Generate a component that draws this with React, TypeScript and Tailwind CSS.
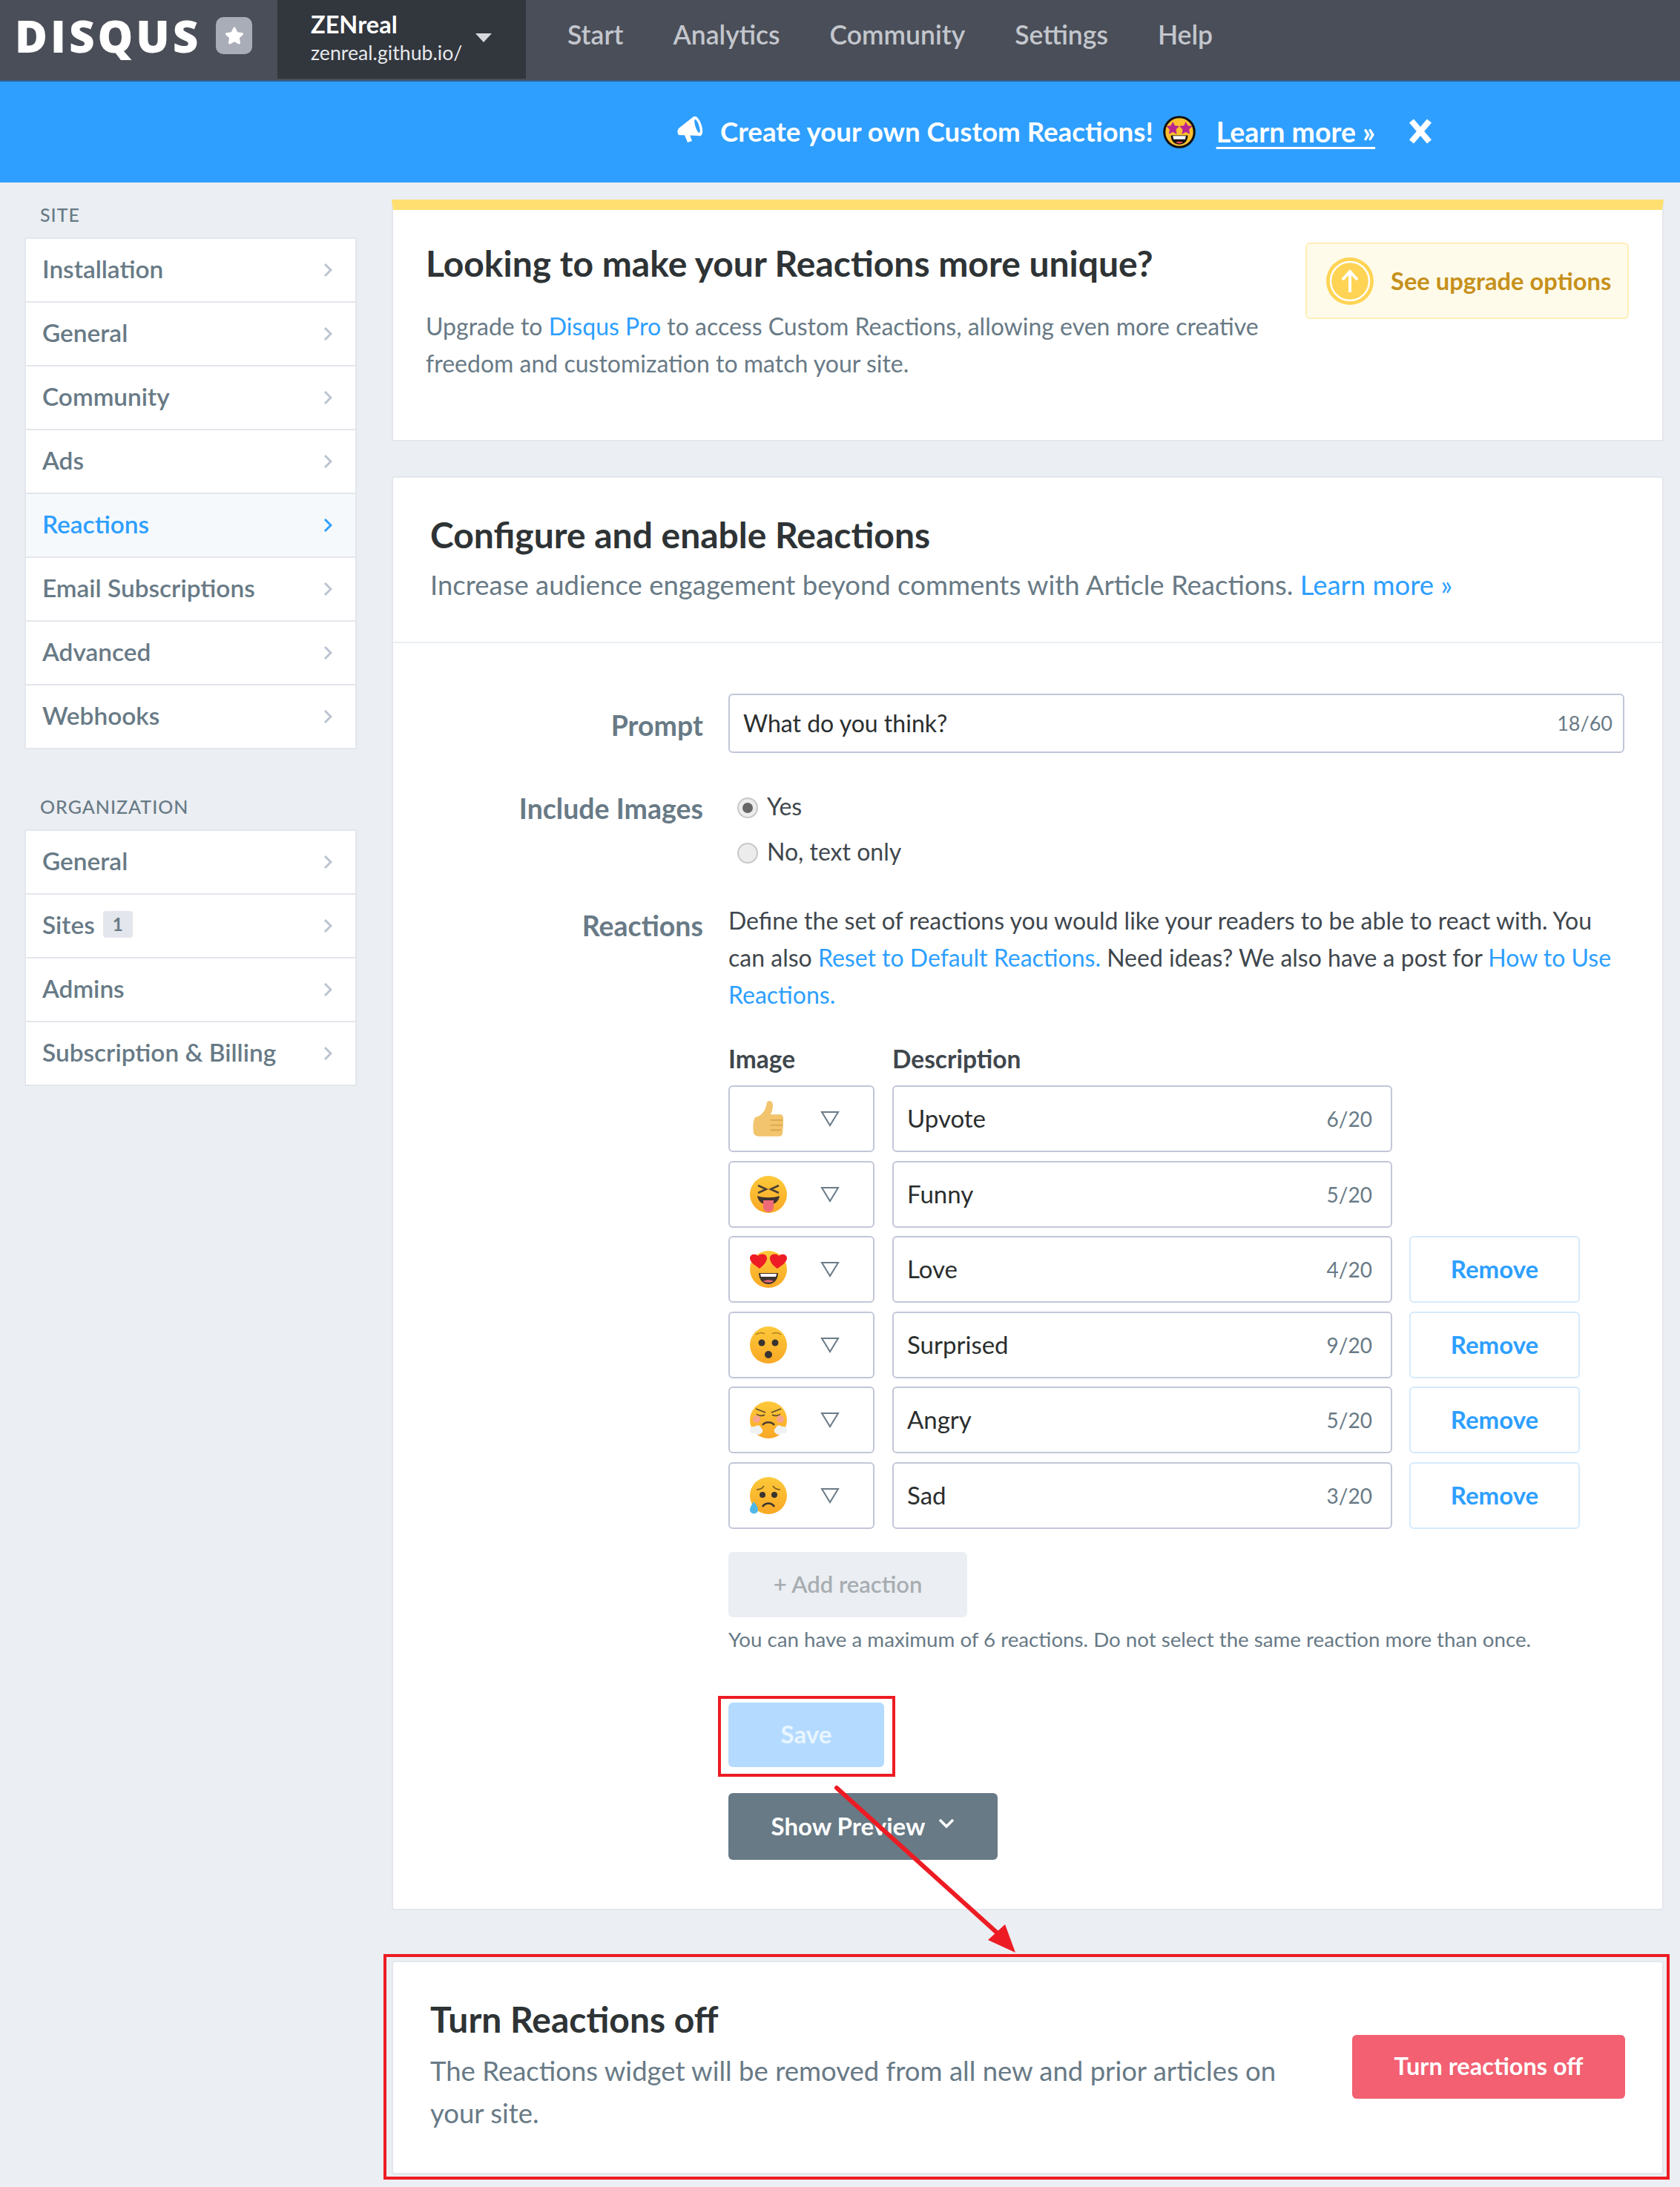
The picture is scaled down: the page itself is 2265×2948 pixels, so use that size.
import type { ReactNode } from "react";
import { FaStar } from "react-icons/fa";

const siteLinks = ["Installation", "General", "Community", "Ads", "Reactions", "Email Subscriptions", "Advanced", "Webhooks"];
const orgLinks = ["General", "Sites", "Admins", "Subscription & Billing"];
const navLinks = ["Start", "Analytics", "Community", "Settings", "Help"];

function Face({ children, id }: { children: ReactNode; id: string }) {
  return (
    <svg width="50" height="50" viewBox="0 0 50 50">
      <defs>
        <linearGradient id={id} x1="0" y1="0" x2="0" y2="1">
          <stop offset="0" stopColor="#fdc93a" />
          <stop offset="1" stopColor="#f9a825" />
        </linearGradient>
      </defs>
      <circle cx="25" cy="25" r="25" fill={`url(#${id})`} />
      {children}
    </svg>
  );
}

const Thumb = () => (
  <svg width="42" height="52" viewBox="0 0 44 52">
    <path
      d="M3 24c5-1 9-3 13-9 3-5 3-9 4-12 1-3 7-3 8 2 1 6-1 11-3 15h14c3 0 4 3 4 5s0 22-2 24c-1 2-3 2-6 2H12C6 51 2 50 1 46 0 40 0 30 3 24z"
      fill="#f2c46d"
    />
    <path d="M25 28h17M25 35h17M25 42h15" stroke="#dca64a" strokeWidth="2" fill="none" />
  </svg>
);

const Funny = () => (
  <Face id="f1">
    <path d="M11 13l11 5-11 5M39 13l-11 5 11 5" stroke="#4a4036" strokeWidth="2.5" fill="none" />
    <path d="M10 27c8 3 22 3 30 0-1 8-7 12-15 12s-14-4-15-12z" fill="#3f3330" />
    <path d="M18 33h14v9c0 9-14 9-14 0z" fill="#ef6a78" />
  </Face>
);

const Love = () => (
  <Face id="f2">
    <path d="M12 30h26c0 9-6 15-13 15s-13-6-13-15z" fill="#3f3330" />
    <path d="M14 31h22l-1 4H15z" fill="#fff" />
    <path d="M18 41c4-2 10-2 14 0-4 2-10 2-14 0z" fill="#ef6a78" />
    <path d="M13 24C7 20 0 15 0 10c0-5 7-7 11-3 3-4 12-3 12 3 0 5-5 10-10 14zM37 24c-6-4-10-9-10-14 0-6 9-7 12-3 4-4 11-2 11 3 0 5-7 10-13 14z" fill="#ee1c25" />
  </Face>
);

const Surprised = () => (
  <Face id="f3">
    <path d="M8 11c4-3 9-3 12-1M30 10c3-2 8-2 12 1" stroke="#a87a20" strokeWidth="1.5" fill="none" />
    <circle cx="16" cy="22" r="4.5" fill="#3a3430" />
    <circle cx="34" cy="22" r="4.5" fill="#3a3430" />
    <circle cx="25" cy="38" r="5" fill="#3a3430" />
  </Face>
);

const Angry = () => (
  <Face id="f4">
    <path d="M8 10l13 5M42 10l-13 5M9 17c3 3 8 3 11 1M41 17c-3 3-8 3-11 1" stroke="#5a4a30" strokeWidth="1.6" fill="none" />
    <circle cx="9" cy="24" r="5" fill="#f8a48c" />
    <circle cx="41" cy="24" r="5" fill="#f8a48c" />
    <path d="M17 32c4-5 12-5 16 0" stroke="#4a3d30" strokeWidth="2.5" fill="none" />
    <path d="M0 39c0-4 4-6 7-5 2-3 8-2 8 2 3 1 3 6 0 7-2 3-7 2-8 0-3 1-7 0-7-4zM50 39c0-4-4-6-7-5-2-3-8-2-8 2-3 1-3 6 0 7 2 3 7 2 8 0 3 1 7 0 7-4z" fill="#eef2f2" />
  </Face>
);

const Sad = () => (
  <Face id="f5">
    <path d="M9 17c4 0 8-2 10-5M41 17c-4 0-8-2-10-5" stroke="#7a5a20" strokeWidth="1.6" fill="none" />
    <circle cx="17" cy="24" r="4" fill="#3a3430" />
    <circle cx="33" cy="24" r="4" fill="#3a3430" />
    <path d="M17 40c4-6 12-6 16 0" stroke="#3a3430" strokeWidth="2.6" fill="none" />
    <path d="M5 33c3 4 6 7 6 11 0 7-11 7-11 0 0-4 3-7 5-11z" fill="#4fb8e8" />
  </Face>
);

const StarStruck = () => (
  <svg width="44" height="44" viewBox="0 0 50 50">
    <circle cx="25" cy="25" r="23" fill="#fcc02f" stroke="#111" strokeWidth="3.5" />
    <path d="M15 9l3 6 7 1-5 5 1 7-6-3-6 3 1-7-5-5 7-1zM35 9l3 6 7 1-5 5 1 7-6-3-6 3 1-7-5-5 7-1z" fill="#b9258f" />
    <path d="M12 30h26c0 9-6 14-13 14s-13-5-13-14z" fill="#111" />
    <path d="M15 31h20l-1 5H16z" fill="#fff" />
    <path d="M19 41c4-2 8-2 12 0-4 2-8 2-12 0z" fill="#e8404a" />
  </svg>
);

const Megaphone = () => (
  <svg width="36" height="36" viewBox="0 0 36 36" className="mb-[6px] shrink-0">
    <path d="M22 1L3 16c-2 2-2 7 0 9l28 1z" fill="#fff" />
    <path d="M11 25l4 10 6-2-3-8z" fill="#fff" />
    <ellipse cx="28" cy="13" rx="6" ry="14" transform="rotate(-18 28 13)" fill="#fff" />
    <ellipse cx="28" cy="13" rx="2.5" ry="9.5" transform="rotate(-18 28 13)" fill="#2f9fff" />
  </svg>
);

const rows = [
  { icon: <Thumb />, name: "Upvote", count: "6/20", remove: false },
  { icon: <Funny />, name: "Funny", count: "5/20", remove: false },
  { icon: <Love />, name: "Love", count: "4/20", remove: true },
  { icon: <Surprised />, name: "Surprised", count: "9/20", remove: true },
  { icon: <Angry />, name: "Angry", count: "5/20", remove: true },
  { icon: <Sad />, name: "Sad", count: "3/20", remove: true },
];

function Chevron({ color = "#bcc3d0" }: { color?: string }) {
  return (
    <svg width="12" height="20" viewBox="0 0 12 20" className="shrink-0">
      <path d="M2 2l8 8-8 8" fill="none" stroke={color} strokeWidth="3" />
    </svg>
  );
}

function SideList({ items, active }: { items: string[]; active?: string }) {
  return (
    <div className="w-[448px] border-2 border-[#e3e6ec] bg-white">
      {items.map((item, i) => (
        <div
          key={item}
          className={`flex h-[84px] items-center justify-between pl-[22px] pr-[31px] font-semibold ${i > 0 ? "box-content border-t-2 border-[#e3e6ec]" : ""} ${item === active ? "bg-[#f6f9fc] text-[#2e9fff]" : "text-[#687a86]"}`}
        >
          <span className="mb-[3px] flex items-center text-[33.4px]">
            {item}
            {item === "Sites" && (
              <span className="ml-[11px] flex h-[36px] w-[40px] items-center justify-center rounded-[4px] bg-[#e3e6ec] text-[24px] font-bold">1</span>
            )}
          </span>
          <Chevron color={item === active ? "#2e9fff" : "#bcc3d0"} />
        </div>
      ))}
    </div>
  );
}

export default function App() {
  return (
    <div className="relative h-[2948px] w-[2265px] overflow-hidden bg-[#ebeef2] font-['Lato','Noto_Sans',sans-serif] text-[32px] text-[#687a86]">
      {/* Top bar */}
      <header className="flex h-[110px] border-b-2 border-[#2f5f8f] bg-[#4a4e58]">
        <div className="flex w-[374px] items-center pb-[12px] pl-[20px]">
          <span className="w-[271px] font-['Open_Sans',sans-serif] text-[60px] font-extrabold leading-none tracking-[4px] text-white">DISQUS</span>
          <span className="flex h-[50px] w-[49px] items-center justify-center rounded-[10px] bg-[#a9adb8] text-white">
            <FaStar className="h-[26px] w-[26px]" />
          </span>
        </div>
        <div className="flex h-[106px] w-[335px] items-center justify-between bg-[#32363d] pb-[4px] pl-[45px] pr-[46px]">
          <div className="text-white">
            <div className="text-[32.5px] font-bold leading-[40px]">ZENreal</div>
            <div className="text-[26.7px] leading-[36px] text-[#e6e8ec]">zenreal.github.io/</div>
          </div>
          <span className="h-0 w-0 border-x-[11px] border-t-[12px] border-x-transparent border-t-[#d6d8dc]" />
        </div>
        <nav className="ml-[56px] flex h-[94px] items-center gap-[67px] text-[35.5px] font-semibold text-[#c3c6cd]">
          {navLinks.map((n) => (
            <span key={n}>{n}</span>
          ))}
        </nav>
      </header>

      {/* Banner */}
      <div className="flex h-[136px] items-center bg-[#2f9fff] pl-[912px] text-[36.7px] font-bold text-white">
        <Megaphone />
        <span className="ml-[23px]">Create your own Custom Reactions!</span>
        <span className="ml-[13px]">
          <StarStruck />
        </span>
        <span className="ml-[28px] text-[37.5px] underline underline-offset-[6px]">Learn more »</span>
        <svg width="34" height="38" viewBox="0 0 34 38" className="mb-[2px] ml-[44px]">
          <path d="M5 5l24 28M29 5L5 33" stroke="#fff" strokeWidth="8" fill="none" />
        </svg>
      </div>

      <div className="flex">
        {/* Sidebar */}
        <aside className="w-[528px] pl-[33px]">
          <div className="mb-[15px] mt-[27px] pl-[21px] text-[25px] font-medium leading-[32px] tracking-[1px]">SITE</div>
          <SideList items={siteLinks} active="Reactions" />
          <div className="mb-[15px] mt-[61px] pl-[21px] text-[25px] font-medium leading-[32px] tracking-[1px]">ORGANIZATION</div>
          <SideList items={orgLinks} />
        </aside>

        {/* Main column */}
        <main className="w-[1715px] pt-[23px]">
          <section className="flex h-[326px] items-start justify-between border-x-2 border-b-2 border-t-[14px] border-[#e3e6ec] border-t-[#ffdf70] bg-white pl-[44px] pr-[45px]">
            <div>
              <h2 className="mt-[42px] text-[48px] font-bold leading-[60px] text-[#2e3335]">Looking to make your Reactions more unique?</h2>
              <p className="mt-[30px] w-[1130px] leading-[50px]">
                Upgrade to <span className="text-[#2e9fff]">Disqus Pro</span> to access Custom Reactions, allowing even more creative freedom and customization to match your site.
              </p>
            </div>
            <div className="mt-[44px] flex h-[103px] w-[436px] items-center gap-[22px] rounded-[6px] border-2 border-[#ffeeb5] bg-[#fffbeb] pl-[25px]">
              <svg width="66" height="66" viewBox="0 0 66 66" className="shrink-0">
                <circle cx="33" cy="33" r="32" fill="#ffd454" />
                <circle cx="33" cy="33" r="26" fill="none" stroke="#fff" strokeWidth="2.5" />
                <path d="M33 48V20M23 31l10-11 10 11" fill="none" stroke="#fff" strokeWidth="4" />
              </svg>
              <span className="text-[32.7px] font-bold text-[#c6911b]">See upgrade options</span>
            </div>
          </section>

          <section className="mt-[47px] rounded-[4px] border-2 border-[#e3e6ec] bg-white">
            <div className="border-b-2 border-[#ebeef2] pb-[52px] pl-[50px] pt-[47px]">
              <h2 className="text-[48px] font-bold leading-[60px] text-[#2e3335]">Configure and enable Reactions</h2>
              <p className="mt-[12px] text-[36.5px] leading-[50px]">
                Increase audience engagement beyond comments with Article Reactions. <span className="text-[#2e9fff]">Learn more »</span>
              </p>
            </div>

            <div className="pb-[66px] pt-[68px]">
              <div className="flex">
                <div className="w-[418px] pt-[21px] text-right text-[37.5px] font-bold leading-[44px]">Prompt</div>
                <div className="ml-[34px] flex h-[80px] w-[1208px] items-center justify-between rounded-[6px] border-2 border-[#c2c6d8] pl-[18px] pr-[14px]">
                  <span className="text-[#2a2e2e]">What do you think?</span>
                  <span className="text-[27px]">18/60</span>
                </div>
              </div>

              <div className="mt-[43px] flex">
                <div className="w-[418px] pt-[10px] text-right text-[37.5px] font-bold leading-[44px]">Include Images</div>
                <div className="ml-[34px] text-[#3f474d]">
                  <div className="flex h-[61px] items-center">
                    <span className="ml-[12px] flex h-[28px] w-[28px] items-center justify-center rounded-full border-2 border-[#c8c8c8] bg-[#ececec]">
                      <span className="h-[14px] w-[14px] rounded-full bg-[#666]" />
                    </span>
                    <span className="mb-[4px] ml-[12px]">Yes</span>
                  </div>
                  <div className="flex h-[61px] items-center">
                    <span className="ml-[12px] h-[28px] w-[28px] rounded-full border-2 border-[#c8c8c8] bg-[#ececec]" />
                    <span className="mb-[4px] ml-[12px]">No, text only</span>
                  </div>
                </div>
              </div>

              <div className="mt-[36px] flex">
                <div className="w-[418px] pt-[10px] text-right text-[37.5px] font-bold leading-[44px]">Reactions</div>
                <div className="ml-[34px] w-[1208px]">
                  <p className="leading-[50px] text-[#3f474d]">
                    Define the set of reactions you would like your readers to be able to react with. You can also <span className="text-[#2e9fff]">Reset to Default Reactions.</span> Need ideas? We also have a post for <span className="text-[#2e9fff]">How to Use Reactions.</span>
                  </p>

                  <div className="mt-[41px] flex text-[33.5px] font-bold leading-[40px] text-[#3f474d]">
                    <span className="w-[221px]">Image</span>
                    <span>Description</span>
                  </div>

                  <div className="mt-[16px] flex flex-col gap-[11.5px]">
                    {rows.map((r) => (
                      <div key={r.name} className="flex h-[90px] items-center">
                        <div className="flex h-full w-[197px] items-center justify-between rounded-[6px] border-2 border-[#c2c6d8] pl-[27px] pr-[45px]">
                          <span className="flex w-[50px] justify-center">{r.icon}</span>
                          <svg width="26" height="22" viewBox="0 0 26 22">
                            <path d="M2 2h22L13 20z" fill="none" stroke="#6b7b88" strokeWidth="2" />
                          </svg>
                        </div>
                        <div className="ml-[24px] flex h-full w-[674px] items-center justify-between rounded-[6px] border-2 border-[#c2c6d8] pl-[18px] pr-[25px]">
                          <span className="text-[33px] text-[#2a2e2e]">{r.name}</span>
                          <span className="text-[28px]">{r.count}</span>
                        </div>
                        {r.remove && (
                          <div className="ml-[23px] flex h-full w-[230px] items-center justify-center rounded-[6px] border-2 border-[#d5eafc] text-[33px] font-bold text-[#2e9fff]">Remove</div>
                        )}
                      </div>
                    ))}
                  </div>

                  <div className="mt-[31px] flex h-[88px] w-[322px] items-center justify-center rounded-[6px] bg-[#ebeef2] text-[31px] font-semibold text-[#a7adb2]">+ Add reaction</div>
                  <p className="mt-[10px] text-[27.7px] leading-[40px]">You can have a maximum of 6 reactions. Do not select the same reaction more than once.</p>
                  <div className="mt-[65px] flex h-[87px] w-[210px] items-center justify-center rounded-[6px] bg-[#b4dbff] text-[33px] font-bold text-[#e9f5ff]">Save</div>
                  <div className="mt-[35px] flex h-[90px] w-[363px] items-center justify-center gap-[18px] rounded-[6px] bg-[#687a86] text-[33px] font-bold text-white">
                    Show Preview
                    <svg width="22" height="14" viewBox="0 0 22 14" className="mb-[8px]">
                      <path d="M2 2l9 9 9-9" fill="none" stroke="#fff" strokeWidth="3.5" />
                    </svg>
                  </div>
                </div>
              </div>
            </div>
          </section>

          <section className="mt-[68px] flex h-[288px] items-start justify-between rounded-[4px] border-2 border-[#e3e6ec] bg-white pl-[50px] pr-[50px]">
            <div className="w-[1160px] pt-[47px]">
              <h2 className="text-[48px] font-bold leading-[60px] text-[#2e3335]">Turn Reactions off</h2>
              <p className="mt-[11px] text-[36.5px] leading-[57px]">The Reactions widget will be removed from all new and prior articles on your site.</p>
            </div>
            <div className="mt-[98px] flex h-[86px] w-[368px] items-center justify-center rounded-[6px] bg-[#f26072] text-[32.5px] font-bold text-white">Turn reactions off</div>
          </section>
        </main>
      </div>

      {/* Red annotations drawn over the page */}
      <div className="absolute left-[968px] top-[2286px] h-[109px] w-[239px] border-[4px] border-[#ed1c24]" />
      <div className="absolute left-[517px] top-[2634px] h-[304px] w-[1734px] border-[4px] border-[#ed1c24]" />
      <svg className="absolute left-[1110px] top-[2400px]" width="280" height="240" viewBox="0 0 280 240">
        <path d="M18 10L245 215" stroke="#ed1c24" strokeWidth="6" strokeLinecap="round" fill="none" />
        <path d="M259 232L222 215L245 194z" fill="#ed1c24" />
      </svg>
    </div>
  );
}
